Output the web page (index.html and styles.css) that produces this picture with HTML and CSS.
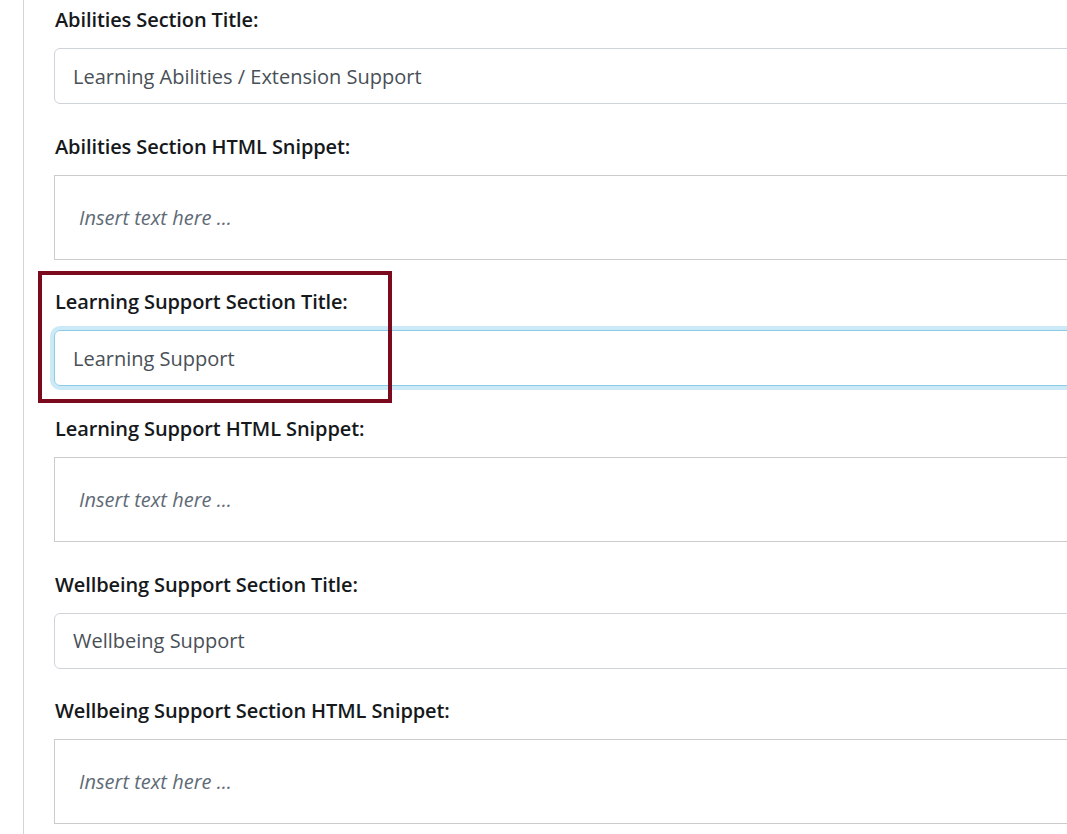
FILE: index.html
```html
<!DOCTYPE html>
<html lang="en">
<head>
<meta charset="utf-8">
<title>Sections</title>
<link rel="stylesheet" href="styles.css">
</head>
<body>
<div class="page">
  <form class="form">
    <div class="group">
      <label class="label">Abilities Section Title:</label>
      <div class="input">Learning Abilities / Extension Support</div>
    </div>
    <div class="group">
      <label class="label">Abilities Section HTML Snippet:</label>
      <div class="textarea"><span class="placeholder">Insert text here ...</span></div>
    </div>
    <div class="group highlighted">
      <label class="label">Learning Support Section Title:</label>
      <div class="input focused">Learning Support</div>
      <div class="highlight-box"></div>
    </div>
    <div class="group">
      <label class="label">Learning Support HTML Snippet:</label>
      <div class="textarea"><span class="placeholder">Insert text here ...</span></div>
    </div>
    <div class="group">
      <label class="label">Wellbeing Support Section Title:</label>
      <div class="input">Wellbeing Support</div>
    </div>
    <div class="group">
      <label class="label">Wellbeing Support Section HTML Snippet:</label>
      <div class="textarea"><span class="placeholder">Insert text here ...</span></div>
    </div>
  </form>
</div>
</body>
</html>
```

FILE: styles.css
```css
html, body {
  margin: 0;
  padding: 0;
  background: #ffffff;
  overflow: hidden;
}
body {
  font-family: "Open Sans", "Noto Sans", sans-serif;
  color: #212529;
}
.page {
  margin-left: 23px;
  border-left: 1px solid #d4d4d4;
  min-height: 834px;
  padding: 6px 0 0 30px;
  overflow: hidden;
}
.form {
  margin-right: -60px;
  display: flex;
  flex-direction: column;
}
.group {
  position: relative;
  display: flex;
  flex-direction: column;
  margin-bottom: 28.7px;
}
.label {
  display: block;
  font-size: 20px;
  font-weight: 600;
  line-height: 28px;
  height: 28px;
  margin: 0 0 14px 1px;
  color: #16191c;
  white-space: nowrap;
  letter-spacing: -0.1px;
}
.input {
  box-sizing: border-box;
  height: 56px;
  border: 1px solid #ced4da;
  border-radius: 6px;
  padding: 0 18px;
  display: flex;
  align-items: center;
  font-size: 20px;
  color: #495057;
  white-space: nowrap;
}
.input.focused {
  border-color: #8ccbe6;
  box-shadow: 0 0 0 4px #cbe9f6;
}
.textarea {
  box-sizing: border-box;
  height: 85px;
  border: 1px solid #cccccc;
  padding: 0 24px;
  display: flex;
  align-items: center;
}
.placeholder {
  font-style: italic;
  font-size: 20px;
  color: #5f6b76;
  white-space: nowrap;
}
.highlight-box {
  position: absolute;
  left: -16px;
  top: -17px;
  width: 346px;
  height: 124px;
  border: 4px solid #7b0a1e;
  pointer-events: none;
}
```
